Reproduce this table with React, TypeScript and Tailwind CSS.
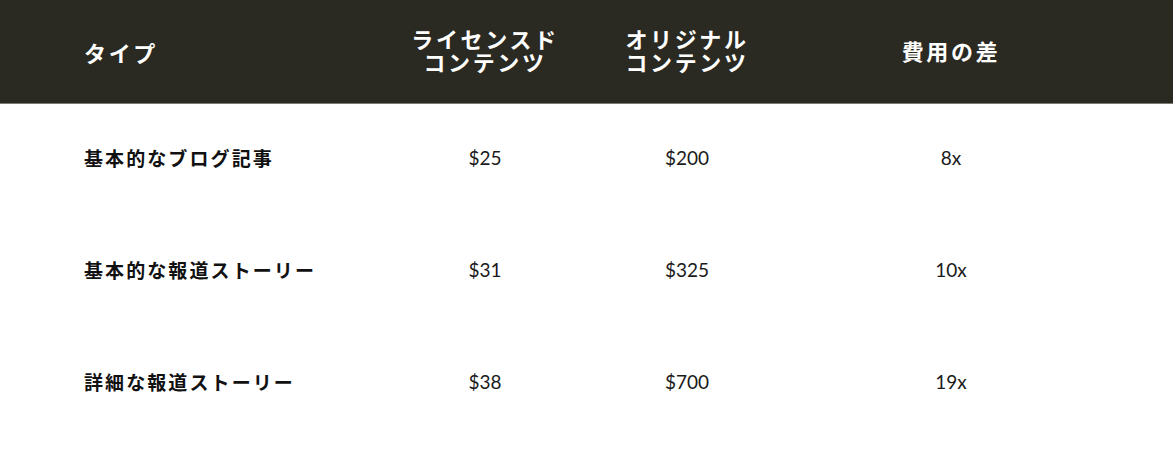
const rows = [
  { type: "基本的なブログ記事", licensed: "$25", original: "$200", diff: "8x" },
  { type: "基本的な報道ストーリー", licensed: "$31", original: "$325", diff: "10x" },
  { type: "詳細な報道ストーリー", licensed: "$38", original: "$700", diff: "19x" },
]

const jp = "font-['Noto_Sans_CJK_JP','Noto_Sans',sans-serif]"
const num = "font-['Lato','Noto_Sans',sans-serif]"
const cols = "grid grid-cols-[385px_200px_204px_324px]"

export default function App() {
  return (
    <div className="h-[461px] w-[1173px] bg-white">
      <div className={`${cols} h-[104px] items-center border-b border-[#7b7a72] bg-[#2a2922] text-white ${jp} font-bold`}>
        <div className="pl-[84px] text-[22px] leading-[24px] tracking-[0.12em]">タイプ</div>
        <div className="-mt-[4px] text-center text-[22px] leading-[23px] tracking-[0.12em]">
          ライセンスド
          <br />
          コンテンツ
        </div>
        <div className="-mt-[4px] text-center text-[22px] leading-[23px] tracking-[0.12em]">
          オリジナル
          <br />
          コンテンツ
        </div>
        <div className="-mt-[4px] text-center text-[22px] leading-[24px] tracking-[0.12em]">費用の差</div>
      </div>
      {rows.map((r) => (
        <div key={r.type} className={`${cols} h-[112px] items-center pb-[3px]`}>
          <div className={`pl-[84px] text-[19px] font-bold tracking-[0.11em] text-[#111] ${jp}`}>{r.type}</div>
          <div className={`text-center text-[19px] text-[#1a1a1a] ${num}`}>{r.licensed}</div>
          <div className={`text-center text-[19px] text-[#1a1a1a] ${num}`}>{r.original}</div>
          <div className={`text-center text-[19px] text-[#1a1a1a] ${num}`}>{r.diff}</div>
        </div>
      ))}
    </div>
  )
}
